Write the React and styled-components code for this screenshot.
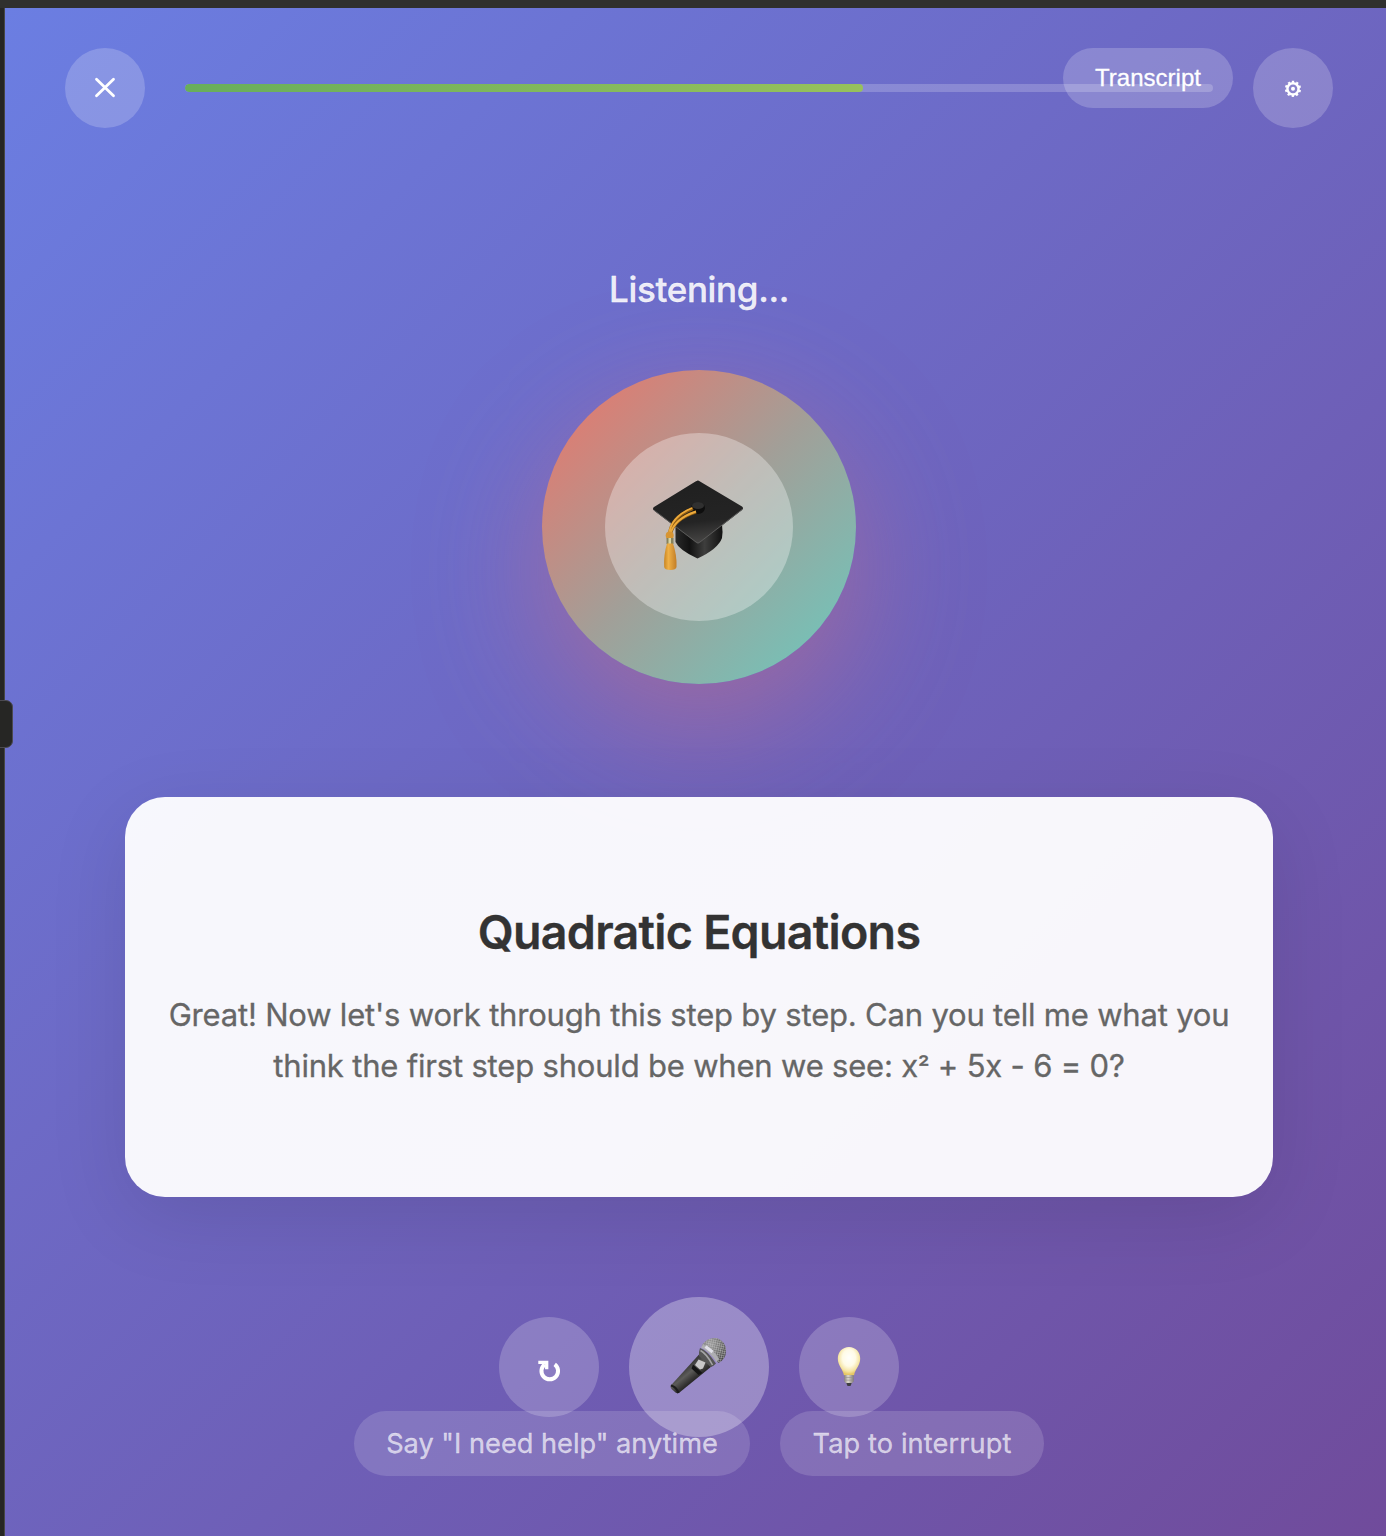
import React from "react";
import styled, { createGlobalStyle } from "styled-components";

const GlobalStyle = createGlobalStyle`
  * { box-sizing: border-box; }
  html, body { margin: 0; padding: 0; overflow: hidden; background: #30302e; }
`;

const Window = styled.div`
  display: flex;
  width: 1386px;
  height: 1536px;
  padding-top: 8px;
  overflow: hidden;
  position: relative;
  background: #30302e;
  font-family: Inter, "Noto Sans", sans-serif;
`;

const Rail = styled.div`
  flex: none;
  width: 5px;
  background: #262624;
  border-right: 1px solid #474745;
`;

const Handle = styled.div`
  position: absolute;
  left: -8px;
  top: 700px;
  width: 21px;
  height: 48px;
  background: #262624;
  border: 1px solid #4b4a50;
  border-radius: 7px;
`;

const Stage = styled.main`
  flex: none;
  width: 1388px;
  height: 1528px;
  display: flex;
  flex-direction: column;
  align-items: center;
  background: linear-gradient(135deg, #6b7ee2 0%, #704b9b 100%);
`;

const Header = styled.header`
  position: relative;
  width: 100%;
  padding: 40px 60px 0;
  display: flex;
  align-items: center;
  gap: 40px;
`;

const RoundButton = styled.button`
  flex: none;
  display: flex;
  align-items: center;
  justify-content: center;
  width: ${(p) => p.$size}px;
  height: ${(p) => p.$size}px;
  padding: 0;
  border: 0;
  border-radius: 50%;
  background: rgba(255, 255, 255, ${(p) => p.$alpha || 0.2});
  color: #fff;
`;

const Track = styled.div`
  width: 1028px;
  height: 8px;
  border-radius: 4px;
  overflow: hidden;
  background: rgba(255, 255, 255, 0.2);
`;

const Fill = styled.div`
  width: 66%;
  height: 100%;
  border-radius: 4px;
  background: linear-gradient(90deg, #68ae5b, #97c15c);
`;

const HeaderActions = styled.div`
  position: absolute;
  top: 40px;
  right: 60px;
  display: flex;
  align-items: flex-start;
  gap: 20px;
`;

const TranscriptButton = styled.button`
  width: 170px;
  height: 60px;
  padding: 0;
  border: 0;
  border-radius: 30px;
  background: rgba(255, 255, 255, 0.2);
  color: #fff;
  font: 24px "Liberation Sans", Arial, sans-serif;
  -webkit-text-stroke: 0.3px;
`;

const Status = styled.div`
  margin-top: 139px;
  height: 44px;
  line-height: 45px;
  font-size: 35px;
  font-weight: 500;
  letter-spacing: -0.33px;
  -webkit-text-stroke: 0.3px;
  color: rgba(255, 255, 255, 0.9);
`;

const Orb = styled.div`
  flex: none;
  margin-top: 59px;
  width: 314px;
  height: 314px;
  border-radius: 50%;
  display: flex;
  align-items: center;
  justify-content: center;
  background: linear-gradient(135deg, #ee7368 0%, #a29f98 50%, #6acabf 100%);
  box-shadow: 0 42px 126px rgba(240, 112, 108, 0.38);
`;

const OrbCore = styled.div`
  width: 188px;
  height: 188px;
  border-radius: 50%;
  display: flex;
  align-items: center;
  justify-content: center;
  background: rgba(255, 255, 255, 0.32);
`;

const Card = styled.section`
  flex: none;
  margin-top: 113px;
  width: 1148px;
  height: 400px;
  padding-top: 2px;
  border-radius: 40px;
  display: flex;
  flex-direction: column;
  align-items: center;
  justify-content: center;
  background: rgba(255, 255, 255, 0.95);
  box-shadow: 0 20px 80px rgba(0, 0, 0, 0.1);
`;

const Title = styled.h1`
  margin: 0 0 28px;
  line-height: 58px;
  font-size: 46.6px;
  font-weight: 600;
  letter-spacing: -0.73px;
  -webkit-text-stroke: 0.3px;
  color: #333;
`;

const Prompt = styled.p`
  margin: 0;
  font-size: 31px;
  line-height: 51.2px;
  letter-spacing: -0.19px;
  text-align: center;
  white-space: nowrap;
  -webkit-text-stroke: 0.3px;
  color: #666;
`;

const Power = styled.span`
  font-size: 26px;
`;

const Controls = styled.div`
  position: relative;
  z-index: 1;
  margin-top: 100px;
  display: flex;
  align-items: center;
  gap: 30px;
`;

const Hints = styled.div`
  margin-top: -26px;
  display: flex;
  gap: 30px;
`;

const Hint = styled.div`
  width: ${(p) => p.$width}px;
  height: 65px;
  border-radius: 33px;
  text-align: center;
  line-height: 66px;
  font-size: 27.2px;
  letter-spacing: ${(p) => p.$spacing}px;
  white-space: nowrap;
  -webkit-text-stroke: 0.3px;
  background: rgba(255, 255, 255, 0.15);
  color: rgba(255, 255, 255, 0.66);
`;

const CloseIcon = () => (
  <svg width="24" height="24" viewBox="0 0 24 24" fill="none" stroke="#fff" strokeWidth="2.8" strokeLinecap="round">
    <path d="M3.5 3.2 20.5 19.8M20.5 3.2 3.5 19.8" />
  </svg>
);

const GearIcon = () => (
  <svg width="20" height="20" viewBox="-10 -10.800 20 20" fill="none" stroke="#fff">
    <circle r="5.6" strokeWidth="2.5" />
    <circle r="7.1" strokeWidth="2.1" strokeDasharray="2.25 2.21" transform="rotate(-99)" />
    <circle r="2" fill="#fff" stroke="none" />
  </svg>
);

const RepeatIcon = () => (
  <svg width="30" height="30" viewBox="0 0 30 30" fill="none" stroke="#fff">
    <path d="M20.700 12.300A8.300 8.300 0 1 1 10.800 12.300" strokeWidth="4" />
    <path d="M4.300 10.300H12.700V17.300" strokeWidth="3.300" />
  </svg>
);

const CapIcon = () => (
  <svg width="96" height="96" viewBox="0 0 96 96">
    <defs>
      <linearGradient id="capTop" x1="0.4" y1="0" x2="0.55" y2="1">
        <stop offset="0" stopColor="#202020" />
        <stop offset="0.65" stopColor="#242424" />
        <stop offset="1" stopColor="#484746" />
      </linearGradient>
      <linearGradient id="capBase">
        <stop offset="0" stopColor="#292929" />
        <stop offset="0.3" stopColor="#121212" />
        <stop offset="0.62" stopColor="#3e3e3d" />
        <stop offset="1" stopColor="#111" />
      </linearGradient>
      <linearGradient id="tassel">
        <stop offset="0" stopColor="#c98520" />
        <stop offset="0.35" stopColor="#efb046" />
        <stop offset="1" stopColor="#c27d27" />
      </linearGradient>
    </defs>
    <path d="M24.5 47V63Q28 71 46.500 79.500Q67 70 71 59Q72 53 71 45Z" fill="url(#capBase)" />
    <path d="M46.700 1.600Q48 1.600 49 2.500L91 27.500Q93 29.200 91 31L49 63.500Q47 65.500 45 63.500L3 31.500Q1 29.600 3 28L44.500 2.500Z" fill="url(#capTop)" />
    <path d="M3 31.200 45 63Q47 65 49 63L91 30.600" fill="none" stroke="#5a5a59" strokeWidth="1" />
    <ellipse cx="47" cy="29" rx="7" ry="6" fill="#0e0e0e" />
    <ellipse cx="47" cy="26.500" rx="6" ry="3.600" fill="#303030" />
    <path d="M42 29.500Q20 38 18.500 55M45 33Q23 40 19.500 55" fill="none" stroke="#8f5c11" strokeWidth="3" />
    <path d="M41 29Q20 38 18 55M45 32.500Q23 40 19.500 55" fill="none" stroke="#ecaa3c" strokeWidth="1.900" />
    <circle cx="18.700" cy="56.500" r="4" fill="#d89532" />
    <path d="M15.500 59H22.500V65H15.500Z" fill="#87825c" />
    <path d="M17.500 59H20V65H17.500Z" fill="#d8d4a3" />
    <path d="M16 64.500H22Q26 76 25.500 88Q25 91 19.500 91Q13.500 91 13.200 88Q12.500 76 16 64.500Z" fill="url(#tassel)" />
  </svg>
);

const MicIcon = () => (
  <svg width="60" height="60" viewBox="0 0 60 60">
    <defs>
      <linearGradient id="micBody" x1="0.3" y1="0.35" x2="0.62" y2="0.72">
        <stop offset="0" stopColor="#333" />
        <stop offset="0.4" stopColor="#5c5b59" />
        <stop offset="0.75" stopColor="#333231" />
        <stop offset="1" stopColor="#1a1a1a" />
      </linearGradient>
      <radialGradient id="micHead" cx="0.35" cy="0.25" r="0.8">
        <stop offset="0" stopColor="#a0a0a0" />
        <stop offset="0.6" stopColor="#6c6c6c" />
        <stop offset="1" stopColor="#444" />
      </radialGradient>
      <pattern id="micMesh" width="2.200" height="2.200" patternUnits="userSpaceOnUse" patternTransform="rotate(12)">
        <path d="M0 0H2.200M0 0V2.200" stroke="#c4c4c4" strokeWidth=".65" />
      </pattern>
    </defs>
    <path d="M30.500 17 1.800 48.500Q1 50 2.500 52L6.500 55.500Q8.500 57 10.500 55.500L43 29Z" fill="url(#micBody)" />
    <path d="M2 48.500Q7 49.500 9.500 56" fill="none" stroke="#1c1c1c" strokeWidth="2.200" />
    <path d="M33 8Q39-.5 48.500 1.200Q57 4.500 57 14Q57 22 49.500 26Z" fill="url(#micHead)" />
    <path d="M33 8Q39-.5 48.500 1.200Q57 4.500 57 14Q57 22 49.500 26Z" fill="url(#micMesh)" />
    <path d="M31 11Q38 13 47 26.500Q44.500 29.500 41.500 30L30 19Q29.500 15 31 11Z" fill="#555" />
    <path d="M31.500 13.500Q38 17 43.500 28" stroke="#a5a5a5" strokeWidth="1.600" fill="none" />
    <path d="M34 7.500Q44 11 50 22L47.500 25Q41 15 32 10.500Z" fill="#aeaeb2" />
    <path d="M36.500 9.500 43.500 15" stroke="#e0e0e8" strokeWidth="3" />
    <path d="M24 27.500 33.500 36 29.500 38 22.500 31.500Z" fill="#151515" />
    <path d="M29.500 22.500 36.500 25.500 34 31.500 31 32.500 26 28Z" fill="#c8c7c8" />
  </svg>
);

const BulbIcon = () => (
  <svg width="26" height="42" viewBox="0 0 26 42">
    <defs>
      <radialGradient id="bulbGlass" cx="0.5" cy="0.38" r="0.58">
        <stop offset="0" stopColor="#fffffc" />
        <stop offset="0.5" stopColor="#fffbe6" />
        <stop offset="0.82" stopColor="#f5e4a3" />
        <stop offset="1" stopColor="#e7c765" />
      </radialGradient>
      <linearGradient id="bulbCap">
        <stop offset="0" stopColor="#88827d" />
        <stop offset="0.4" stopColor="#ded9cf" />
        <stop offset="1" stopColor="#817b78" />
      </linearGradient>
    </defs>
    <path d="M13 1C6.500 1 1.800 6 1.800 12.500C1.800 20 6.800 22.500 8 29.500H18C19.200 22.500 24.200 20 24.200 12.500C24.200 6 19.500 1 13 1Z" fill="url(#bulbGlass)" />
    <path d="M8.300 29H17.700V35.500L15.500 37.500H10.500L8.300 35.500Z" fill="url(#bulbCap)" />
    <path d="M8.500 31.500H17.500M8.500 34.200H17.500" stroke="#948f8b" strokeWidth=".6" />
    <path d="M10.300 37H15.700L14.500 40H11.500Z" fill="#3e3c42" />
  </svg>
);

export default function App() {
  return (
    <Window>
      <GlobalStyle />
      <Rail />
      <Stage>
        <Header>
          <RoundButton $size={80} aria-label="Close"><CloseIcon /></RoundButton>
          <Track><Fill /></Track>
          <HeaderActions>
            <TranscriptButton>Transcript</TranscriptButton>
            <RoundButton $size={80} aria-label="Settings"><GearIcon /></RoundButton>
          </HeaderActions>
        </Header>
        <Status>Listening...</Status>
        <Orb><OrbCore><CapIcon /></OrbCore></Orb>
        <Card>
          <Title>Quadratic Equations</Title>
          <Prompt>
            Great! Now let's work through this step by step. Can you tell me what you
            <br />
            think the first step should be when we see: x<Power>²</Power> + 5x - 6 = 0?
          </Prompt>
        </Card>
        <Controls>
          <RoundButton $size={100} aria-label="Repeat"><RepeatIcon /></RoundButton>
          <RoundButton $size={140} $alpha={0.3} aria-label="Speak"><MicIcon /></RoundButton>
          <RoundButton $size={100} aria-label="Idea"><BulbIcon /></RoundButton>
        </Controls>
        <Hints>
          <Hint $width={396} $spacing={0}>Say "I need help" anytime</Hint>
          <Hint $width={264} $spacing={0.1}>Tap to interrupt</Hint>
        </Hints>
      </Stage>
      <Handle />
    </Window>
  );
}
